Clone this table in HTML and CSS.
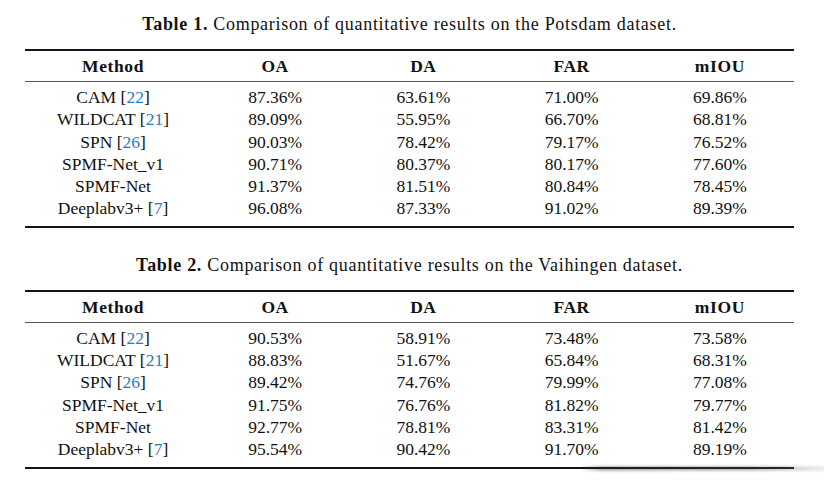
FILE: index.html
```html
<!DOCTYPE html>
<html>
<head>
<meta charset="utf-8">
<link rel="stylesheet" href="styles.css">
</head>
<body>
<div class="page">
  <section class="block first">
    <p class="caption"><b>Table 1.</b> Comparison of quantitative results on the Potsdam dataset.</p>
    <table class="results">
      <colgroup><col class="c-method"><col class="c-num"><col class="c-num"><col class="c-num"><col class="c-num"></colgroup>
      <thead>
        <tr><th>Method</th><th>OA</th><th>DA</th><th>FAR</th><th>mIOU</th></tr>
      </thead>
      <tbody>
        <tr><td>CAM [<span class="ref">22</span>]</td><td>87.36%</td><td>63.61%</td><td>71.00%</td><td>69.86%</td></tr>
        <tr><td>WILDCAT [<span class="ref">21</span>]</td><td>89.09%</td><td>55.95%</td><td>66.70%</td><td>68.81%</td></tr>
        <tr><td>SPN [<span class="ref">26</span>]</td><td>90.03%</td><td>78.42%</td><td>79.17%</td><td>76.52%</td></tr>
        <tr><td>SPMF-Net_v1</td><td>90.71%</td><td>80.37%</td><td>80.17%</td><td>77.60%</td></tr>
        <tr><td>SPMF-Net</td><td>91.37%</td><td>81.51%</td><td>80.84%</td><td>78.45%</td></tr>
        <tr><td>Deeplabv3+ [<span class="ref">7</span>]</td><td>96.08%</td><td>87.33%</td><td>91.02%</td><td>89.39%</td></tr>
      </tbody>
    </table>
  </section>
  <section class="block second">
    <p class="caption"><b>Table 2.</b> Comparison of quantitative results on the Vaihingen dataset.</p>
    <div class="table-wrap">
      <table class="results">
        <colgroup><col class="c-method"><col class="c-num"><col class="c-num"><col class="c-num"><col class="c-num"></colgroup>
        <thead>
          <tr><th>Method</th><th>OA</th><th>DA</th><th>FAR</th><th>mIOU</th></tr>
        </thead>
        <tbody>
          <tr><td>CAM [<span class="ref">22</span>]</td><td>90.53%</td><td>58.91%</td><td>73.48%</td><td>73.58%</td></tr>
          <tr><td>WILDCAT [<span class="ref">21</span>]</td><td>88.83%</td><td>51.67%</td><td>65.84%</td><td>68.31%</td></tr>
          <tr><td>SPN [<span class="ref">26</span>]</td><td>89.42%</td><td>74.76%</td><td>79.99%</td><td>77.08%</td></tr>
          <tr><td>SPMF-Net_v1</td><td>91.75%</td><td>76.76%</td><td>81.82%</td><td>79.77%</td></tr>
          <tr><td>SPMF-Net</td><td>92.77%</td><td>78.81%</td><td>83.31%</td><td>81.42%</td></tr>
          <tr><td>Deeplabv3+ [<span class="ref">7</span>]</td><td>95.54%</td><td>90.42%</td><td>91.70%</td><td>89.19%</td></tr>
        </tbody>
      </table>
      <div class="smear"></div>
      <div class="wash"></div>
    </div>
  </section>
</div>
</body>
</html>
```

FILE: styles.css
```css
html, body {
  margin: 0;
  padding: 0;
  background: #ffffff;
}

body {
  font-family: "Liberation Serif", "Times New Roman", serif;
  font-size: 17.5px;
  color: #111111;
}

.page {
  width: 824px;
  height: 481px;
  overflow: hidden;
  padding-top: 14px;
  box-sizing: border-box;
}

.block {
  display: flex;
  flex-direction: column;
  align-items: flex-start;
  padding-left: 25px;
}

.second {
  margin-top: 27px;
}

.caption {
  margin: 0 0 15px 0;
  width: 769px;
  text-align: center;
  line-height: 20px;
  font-size: 18px;
  letter-spacing: 0.7px;
}

.caption b {
  font-weight: bold;
}

.table-wrap {
  position: relative;
}

.results {
  width: 769px;
  border-collapse: collapse;
  table-layout: fixed;
  border-top: 2px solid #151515;
  border-bottom: 2px solid #151515;
}

.c-method { width: 176px; }
.c-num { width: 148.25px; }

.results th {
  font-weight: bold;
  line-height: 20px;
  padding: 5px 0;
  text-align: center;
  letter-spacing: 0.6px;
  border-bottom: 1px solid #555555;
}

.results td {
  line-height: 22.3px;
  padding: 0;
  text-align: center;
  white-space: nowrap;
}

.results tbody tr:first-child td {
  padding-top: 4px;
}

.results tbody tr:last-child td {
  padding-bottom: 6px;
}

.ref {
  color: #2b7bbb;
}

.smear {
  position: absolute;
  left: 555px;
  bottom: -2px;
  width: 262px;
  height: 5px;
  background: linear-gradient(to right, rgba(40, 40, 40, 0.0) 0%, rgba(40, 40, 40, 0.35) 8%, rgba(70, 70, 70, 0.35) 65%, rgba(140, 140, 140, 0.2) 90%, rgba(200, 200, 200, 0) 100%);
  filter: blur(1px);
}

.wash {
  position: absolute;
  left: 580px;
  bottom: 7px;
  width: 240px;
  height: 6px;
  background: linear-gradient(to right, rgba(255, 255, 255, 0) 0%, rgba(255, 255, 255, 0.5) 20%, rgba(255, 255, 255, 0.6) 100%);
  filter: blur(1px);
}
```
